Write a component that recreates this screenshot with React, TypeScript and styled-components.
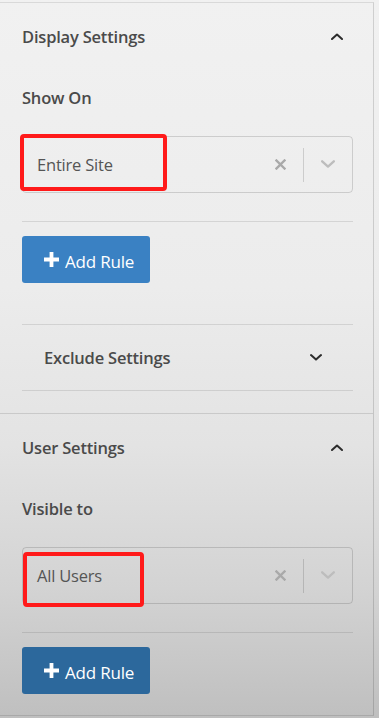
import React from "react";
import styled, { createGlobalStyle } from "styled-components";

const GlobalStyle = createGlobalStyle`
  html, body {
    margin: 0;
    padding: 0;
  }
  body {
    min-height: 718px;
    background: linear-gradient(180deg, #f1f1f1 0%, #ececec 40%, #e3e3e3 62%, #d3d3d3 82%, #bfbfbf 100%);
    font-family: "Open Sans", "Noto Sans", sans-serif;
  }
`;

type MarkBox = { x: number; y: number; w: number; h: number };

const Chevron = ({ dir, color, size = 12 }: { dir: "up" | "down"; color: string; size?: number }) => (
  <svg width={size} height={size * 0.6} viewBox="0 0 12 7" fill="none">
    <polyline
      points={dir === "up" ? "1,6 6,1.5 11,6" : "1,1 6,5.5 11,1"}
      stroke={color}
      strokeWidth="2"
      strokeLinecap="round"
      strokeLinejoin="round"
    />
  </svg>
);

const ClearIcon = () => (
  <svg width="11" height="11" viewBox="0 0 11 11">
    <path d="M1.5 1.5 L9.5 9.5 M9.5 1.5 L1.5 9.5" stroke="#a9a9a9" strokeWidth="2.4" strokeLinecap="square" />
  </svg>
);

const PlusIcon = () => (
  <svg width="17" height="17" viewBox="0 0 17 17">
    <path d="M8.5 1 V16 M1 8.5 H16" stroke="#fff" strokeWidth="3.8" />
  </svg>
);

function SettingsBlock({ title, label, value, mark, dark }: { title: string; label: string; value: string; mark: MarkBox; dark?: boolean }) {
  return (
    <>
      <Header>
        <Title>{title}</Title>
        <Chevron dir="up" color="#2c2c2c" />
      </Header>
      <Label>{label}</Label>
      <Select>
        <Value>{value}</Value>
        <Mark $x={mark.x} $y={mark.y} $w={mark.w} $h={mark.h} />
        <ClearZone><ClearIcon /></ClearZone>
        <Sep />
        <ArrowZone><Chevron dir="down" color="#bdbdbd" size={14} /></ArrowZone>
      </Select>
      <Divider />
      <AddButton $dark={dark}>
        <PlusIcon />
        <span>Add Rule</span>
      </AddButton>
    </>
  );
}

export default function App() {
  return (
    <>
      <GlobalStyle />
      <Panel>
        <Section>
          <SettingsBlock
            title="Display Settings"
            label="Show On"
            value="Entire Site"
            mark={{ x: -3, y: -3, w: 147, h: 57 }}
          />
          <Divider $gap={41} />
          <ExcludeRow>
            <Title>Exclude Settings</Title>
            <Chevron dir="down" color="#2c2c2c" />
          </ExcludeRow>
          <Divider $gap={0} />
        </Section>
        <Section $last>
          <SettingsBlock
            title="User Settings"
            label="Visible to"
            value="All Users"
            mark={{ x: 0, y: 4, w: 121, h: 55 }}
            dark
          />
        </Section>
      </Panel>
    </>
  );
}

const Panel = styled.div`
  width: 374px;
  box-sizing: border-box;
  margin-top: 2px;
  border-top: 1px solid #d9d9d9;
  border-right: 1px solid rgba(0, 0, 0, 0.14);
  border-bottom: 1px solid #a9a9a9;
`;

const Section = styled.div<{ $last?: boolean }>`
  padding: 0 20px ${(p) => (p.$last ? "21px" : "22px")} 22px;
  border-bottom: ${(p) => (p.$last ? "none" : "1px solid rgba(0, 0, 0, 0.12)")};
`;

const Header = styled.div`
  height: 67px;
  display: flex;
  align-items: center;
  justify-content: space-between;
  padding-right: 10px;
`;

const Title = styled.div`
  font-size: 16.5px;
  font-weight: 600;
  color: #4a4a4a;
  letter-spacing: -0.2px;
`;

const Label = styled.div`
  margin-top: 18px;
  height: 20px;
  line-height: 20px;
  font-size: 16.5px;
  font-weight: 600;
  color: #4a4a4a;
  letter-spacing: -0.2px;
`;

const Select = styled.div`
  position: relative;
  margin-top: 28px;
  height: 57px;
  box-sizing: border-box;
  border: 1px solid rgba(0, 0, 0, 0.14);
  border-radius: 4px;
  display: flex;
  align-items: center;
`;

const Value = styled.div`
  flex: 1;
  padding-left: 14px;
  font-size: 16.5px;
  color: #555;
  letter-spacing: -0.2px;
`;

const Mark = styled.div<{ $x: number; $y: number; $w: number; $h: number }>`
  position: absolute;
  left: ${(p) => p.$x}px;
  top: ${(p) => p.$y}px;
  width: ${(p) => p.$w}px;
  height: ${(p) => p.$h}px;
  box-sizing: border-box;
  border: 4px solid #ff1a1a;
  border-radius: 4px;
`;

const ClearZone = styled.div`
  width: 46px;
  display: flex;
  justify-content: center;
  align-items: center;
`;

const Sep = styled.div`
  width: 1px;
  height: 34px;
  background: rgba(0, 0, 0, 0.14);
`;

const ArrowZone = styled.div`
  width: 48px;
  display: flex;
  justify-content: center;
  align-items: center;
`;

const Divider = styled.div<{ $gap?: number }>`
  margin-top: ${(p) => p.$gap ?? 28}px;
  height: 1px;
  background: rgba(0, 0, 0, 0.1);
`;

const AddButton = styled.button<{ $dark?: boolean }>`
  margin-top: 14px;
  width: 128px;
  height: 47px;
  border: none;
  border-radius: 3px;
  background: ${(p) => (p.$dark ? "#2c689c" : "#3a81c3")};
  color: #fff;
  font-family: "Open Sans", "Noto Sans", sans-serif;
  font-size: 17px;
  display: flex;
  align-items: center;
  gap: 5px;
  padding: 0 0 0 21px;
  letter-spacing: -0.2px;
  span {
    margin-top: 4px;
  }
`;

const ExcludeRow = styled.div`
  height: 65px;
  display: flex;
  align-items: center;
  justify-content: space-between;
  padding: 0 31px 0 22px;
`;
